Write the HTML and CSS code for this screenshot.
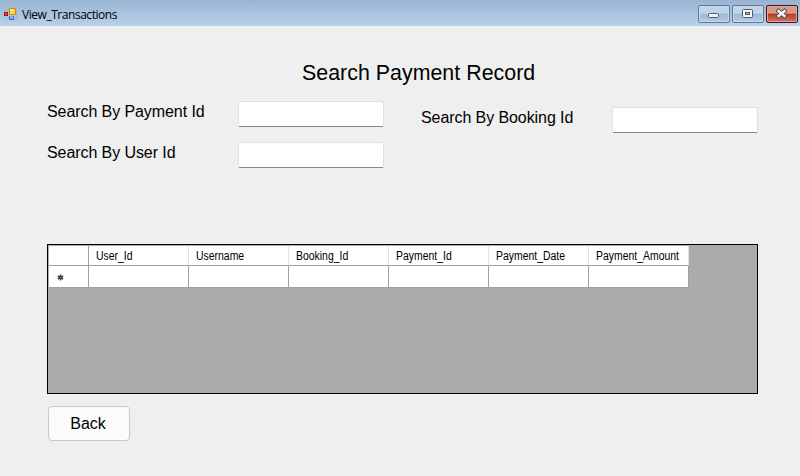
FILE: index.html
```html
<!DOCTYPE html>
<html lang="en">
<head>
<meta charset="utf-8">
<title>View_Transactions</title>
<link rel="stylesheet" href="styles.css">
</head>
<body>
<header class="titlebar">
  <svg class="app-icon" width="13" height="14" viewBox="0 0 13 14" shape-rendering="crispEdges">
    <path d="M.5 3.500h5v8h-5z M5.500 .5h7v12h-7z" fill="none" stroke="#b5b5b0"/>
    <rect x="5" y="1" width="7" height="7" fill="#c98f12"/><rect x="6" y="2" width="5" height="5" fill="#ffd34a"/><rect x="6" y="2" width="3" height="2" fill="#ffeb9c"/>
    <rect x="0" y="5" width="4" height="4" fill="#a31208"/><rect x="1" y="6" width="2" height="2" fill="#ed4b32"/>
    <rect x="5" y="9" width="5" height="4" fill="#3567cf"/><rect x="6" y="9" width="3" height="3" fill="#86b0ff"/>
  </svg>
  <span class="caption">View_Transactions</span>
  <div class="controls">
    <span class="control"><svg width="30" height="16" viewBox="0 0 30 16"><rect x="9.500" y="7.500" width="10" height="4" rx="1" fill="#f4f4f4" stroke="#525b6b"/></svg></span>
    <span class="control"><svg width="30" height="16" viewBox="0 0 30 16"><rect x="9.500" y="3.500" width="10" height="8" rx="1" fill="#f6f6f6" stroke="#525b6b"/><rect x="12.500" y="6.500" width="4" height="2" fill="#9bbbdd" stroke="#525b6b"/></svg></span>
    <span class="control close"><svg width="30" height="16" viewBox="0 0 30 16"><path d="M11.500 5l6 5M17.500 5l-6 5" fill="none" stroke="#4b4450" stroke-width="4.200" stroke-linecap="square"/><path d="M11.500 5l6 5M17.500 5l-6 5" fill="none" stroke="#f7f7f7" stroke-width="2.400" stroke-linecap="square"/></svg></span>
  </div>
</header>
<main>
  <h1>Search Payment Record</h1>
  <form class="search">
    <div class="fields">
      <label class="field"><span>Search By Payment Id</span><input type="text"></label>
      <label class="field"><span>Search By User Id</span><input type="text"></label>
    </div>
    <div class="fields right">
      <label class="field"><span>Search By Booking Id</span><input type="text"></label>
    </div>
  </form>
  <section class="data">
    <div class="grid">
      <div class="head corner"></div>
      <div class="head"><span>User_Id</span></div>
      <div class="head"><span>Username</span></div>
      <div class="head"><span>Booking_Id</span></div>
      <div class="head"><span>Payment_Id</span></div>
      <div class="head"><span>Payment_Date</span></div>
      <div class="head"><span>Payment_Amount</span></div>
      <div class="cell marker"><svg width="7" height="7" viewBox="0 0 7 7"><path d="M3.500 .5v6M.8 2l5.400 3M.8 5l5.400-3" stroke="#484848" stroke-width="1.500"/><circle cx="3.500" cy="3.500" r="2" fill="#484848"/></svg></div>
      <div class="cell"></div><div class="cell"></div><div class="cell"></div>
      <div class="cell"></div><div class="cell"></div><div class="cell"></div>
    </div>
  </section>
  <button class="back" type="button">Back</button>
</main>
</body>
</html>
```
FILE: styles.css
```css
* { box-sizing: border-box; }
body {
  margin: 0;
  height: 476px;
  overflow: hidden;
  background: #efefef;
  color: #000;
  font-family: "Liberation Sans", Arial, sans-serif;
  font-size: 16px;
}
.titlebar {
  display: flex;
  align-items: flex-start;
  height: 26px;
  padding: 5px 2px 0 4px;
  background: linear-gradient(#98b4d2, #b9d1ea);
}
.app-icon { margin-top: 2px; }
.caption {
  margin-left: 5px;
  font: 12px/19px "Open Sans", "Noto Sans", sans-serif;
  letter-spacing: -0.46px;
  white-space: nowrap;
}
.controls { display: flex; gap: 2px; margin-left: auto; }
.control {
  width: 32px;
  height: 18px;
  border: 1px solid #64788f;
  border-radius: 2px;
  background: linear-gradient(#c0d4e9 0 45%, #9bb8d6 50%, #b4cde6);
  box-shadow: inset 0 0 0 1px #c8dbee;
}
.control svg { display: block; }
.close {
  border-color: #43101b;
  background: linear-gradient(#d99888 0 45%, #b83a22 50%, #cf765e);
  box-shadow: inset 0 0 0 1px #dfa599;
}
main { padding: 33px 42px 0 47px; }
h1 {
  margin: 0 0 0 255px;
  font-size: 21.333px;
  font-weight: 400;
  line-height: 28px;
  letter-spacing: 0.04px;
  white-space: nowrap;
}
.search {
  display: flex;
  justify-content: space-between;
  height: 157px;
  padding-top: 14px;
}
.fields { display: flex; flex-direction: column; gap: 15px; width: 337px; }
.right { padding-top: 6px; }
.field {
  display: flex;
  justify-content: space-between;
  height: 26px;
  line-height: 21px;
  letter-spacing: -0.08px;
  white-space: nowrap;
}
input {
  width: 146px;
  height: 26px;
  margin: 0;
  padding: 2px 4px;
  border: 1px solid #e0e0e0;
  border-bottom-color: #868686;
  border-radius: 2px;
  background: #fff;
  outline: 0;
}
.data { height: 150px; border: 1px solid #000; padding: 1px 0 0 1px; background: #ababab; }
.grid { display: grid; grid-template-columns: 40px repeat(6, 100px); grid-template-rows: 20px 22px; width: 640px; }
.head {
  border-right: 1px solid #e2e2e2;
  border-bottom: 1px solid #a0a0a0;
  background: #fff;
  padding-left: 7px;
  font-size: 12px;
  line-height: 20px;
  white-space: nowrap;
}
.head span { display: inline-block; transform: scaleX(0.87); transform-origin: left; }
.corner { border-right-color: #a0a0a0; }
.cell { border-right: 1px solid #a0a0a0; border-bottom: 1px solid #a0a0a0; background: #fff; }
.marker { padding: 8px 0 0 8px; }
.marker svg { display: block; }
.back {
  display: block;
  width: 82px;
  height: 35px;
  margin: 12px 0 0 1px;
  padding: 0 2px 0 0;
  border: 1px solid #c8c8c8;
  border-radius: 4px;
  background: #fbfbfb;
  color: #000;
  font: 16px "Liberation Sans", Arial, sans-serif;
}
```
